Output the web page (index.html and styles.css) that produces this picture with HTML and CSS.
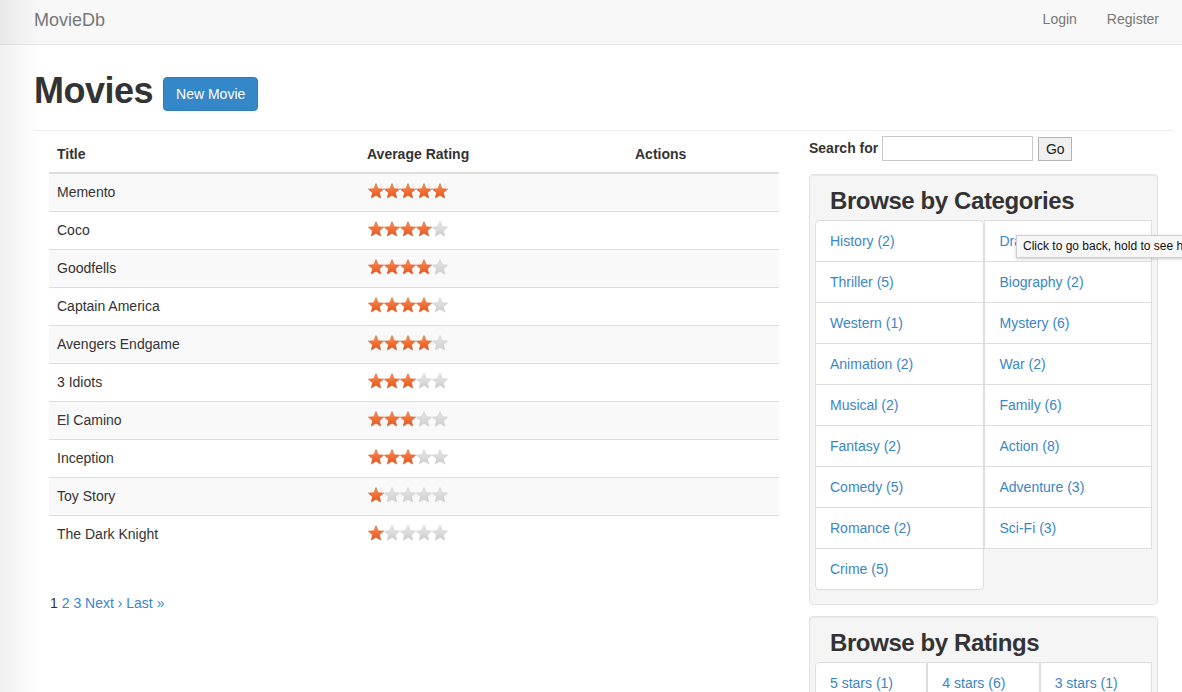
FILE: index.html
```html
<!DOCTYPE html>
<html lang="en">
<head>
<meta charset="utf-8">
<title>MovieDb</title>
<link rel="stylesheet" href="styles.css">
</head>
<body>
<svg class="defs" width="0" height="0" aria-hidden="true">
  <defs>
    <linearGradient id="gOn" x1="0" y1="0" x2="0" y2="1">
      <stop offset="0" stop-color="#fb9a5c"/>
      <stop offset="0.5" stop-color="#f26f35"/>
      <stop offset="1" stop-color="#e2561c"/>
    </linearGradient>
    <linearGradient id="gOff" x1="0" y1="0" x2="0" y2="1">
      <stop offset="0" stop-color="#e6e6e6"/>
      <stop offset="1" stop-color="#cfcfcf"/>
    </linearGradient>
    <symbol id="starOn" viewBox="0 0 16 16">
      <polygon points="8,0.6 10.12,5.69 15.61,6.13 11.42,9.71 12.7,15.07 8,12.2 3.3,15.07 4.58,9.71 0.39,6.13 5.88,5.69" fill="url(#gOn)" stroke="#d9551f" stroke-width="0.6" stroke-linejoin="round"/>
    </symbol>
    <symbol id="starOff" viewBox="0 0 16 16">
      <polygon points="8,0.6 10.12,5.69 15.61,6.13 11.42,9.71 12.7,15.07 8,12.2 3.3,15.07 4.58,9.71 0.39,6.13 5.88,5.69" fill="url(#gOff)" stroke="#c9c9c9" stroke-width="0.6" stroke-linejoin="round"/>
    </symbol>
  </defs>
</svg>

<nav class="navbar">
  <a class="brand" href="#">MovieDb</a>
  <ul class="nav-right">
    <li><a href="#">Login</a></li>
    <li><a href="#">Register</a></li>
  </ul>
</nav>

<div class="container">
  <div class="page-header">
    <h1>Movies</h1>
    <a class="btn-primary" href="#">New Movie</a>
  </div>

  <div class="row">
    <div class="col-main">
      <table class="table">
        <thead>
          <tr><th class="c-title">Title</th><th class="c-rating">Average Rating</th><th class="c-actions">Actions</th></tr>
        </thead>
        <tbody>
          <tr><td>Memento</td><td><span class="stars"><svg><use href="#starOn"/></svg><svg><use href="#starOn"/></svg><svg><use href="#starOn"/></svg><svg><use href="#starOn"/></svg><svg><use href="#starOn"/></svg></span></td><td></td></tr>
          <tr><td>Coco</td><td><span class="stars"><svg><use href="#starOn"/></svg><svg><use href="#starOn"/></svg><svg><use href="#starOn"/></svg><svg><use href="#starOn"/></svg><svg><use href="#starOff"/></svg></span></td><td></td></tr>
          <tr><td>Goodfells</td><td><span class="stars"><svg><use href="#starOn"/></svg><svg><use href="#starOn"/></svg><svg><use href="#starOn"/></svg><svg><use href="#starOn"/></svg><svg><use href="#starOff"/></svg></span></td><td></td></tr>
          <tr><td>Captain America</td><td><span class="stars"><svg><use href="#starOn"/></svg><svg><use href="#starOn"/></svg><svg><use href="#starOn"/></svg><svg><use href="#starOn"/></svg><svg><use href="#starOff"/></svg></span></td><td></td></tr>
          <tr><td>Avengers Endgame</td><td><span class="stars"><svg><use href="#starOn"/></svg><svg><use href="#starOn"/></svg><svg><use href="#starOn"/></svg><svg><use href="#starOn"/></svg><svg><use href="#starOff"/></svg></span></td><td></td></tr>
          <tr><td>3 Idiots</td><td><span class="stars"><svg><use href="#starOn"/></svg><svg><use href="#starOn"/></svg><svg><use href="#starOn"/></svg><svg><use href="#starOff"/></svg><svg><use href="#starOff"/></svg></span></td><td></td></tr>
          <tr><td>El Camino</td><td><span class="stars"><svg><use href="#starOn"/></svg><svg><use href="#starOn"/></svg><svg><use href="#starOn"/></svg><svg><use href="#starOff"/></svg><svg><use href="#starOff"/></svg></span></td><td></td></tr>
          <tr><td>Inception</td><td><span class="stars"><svg><use href="#starOn"/></svg><svg><use href="#starOn"/></svg><svg><use href="#starOn"/></svg><svg><use href="#starOff"/></svg><svg><use href="#starOff"/></svg></span></td><td></td></tr>
          <tr><td>Toy Story</td><td><span class="stars"><svg><use href="#starOn"/></svg><svg><use href="#starOff"/></svg><svg><use href="#starOff"/></svg><svg><use href="#starOff"/></svg><svg><use href="#starOff"/></svg></span></td><td></td></tr>
          <tr><td>The Dark Knight</td><td><span class="stars"><svg><use href="#starOn"/></svg><svg><use href="#starOff"/></svg><svg><use href="#starOff"/></svg><svg><use href="#starOff"/></svg><svg><use href="#starOff"/></svg></span></td><td></td></tr>
        </tbody>
      </table>
      <div class="pagination">
        <span class="current">1</span> <a href="#">2</a> <a href="#">3</a> <a href="#">Next ›</a> <a href="#">Last »</a>
      </div>
    </div>

    <div class="col-side">
      <form class="search">
        <label for="q">Search for</label>
        <input id="q" type="text">
        <button type="button">Go</button>
      </form>

      <div class="well">
        <h3>Browse by Categories</h3>
        <div class="list-group cols-2">
          <a class="item" href="#">History (2)</a>
          <a class="item" href="#">Drama (4)</a>
          <a class="item" href="#">Thriller (5)</a>
          <a class="item" href="#">Biography (2)</a>
          <a class="item" href="#">Western (1)</a>
          <a class="item" href="#">Mystery (6)</a>
          <a class="item" href="#">Animation (2)</a>
          <a class="item" href="#">War (2)</a>
          <a class="item" href="#">Musical (2)</a>
          <a class="item" href="#">Family (6)</a>
          <a class="item" href="#">Fantasy (2)</a>
          <a class="item" href="#">Action (8)</a>
          <a class="item" href="#">Comedy (5)</a>
          <a class="item" href="#">Adventure (3)</a>
          <a class="item" href="#">Romance (2)</a>
          <a class="item" href="#">Sci-Fi (3)</a>
          <a class="item last" href="#">Crime (5)</a>
        </div>
      </div>

      <div class="well well-ratings">
        <h3>Browse by Ratings</h3>
        <div class="list-group cols-3">
          <a class="item" href="#">5 stars (1)</a>
          <a class="item" href="#">4 stars (6)</a>
          <a class="item" href="#">3 stars (1)</a>
          <a class="item" href="#">2 stars (1)</a>
          <a class="item last" href="#">1 star (2)</a>
        </div>
      </div>
    </div>
  </div>
</div>

<div class="tooltip">Click to go back, hold to see history</div>
<div class="edge-shadow"></div>
</body>
</html>
```

FILE: styles.css
```css
html {
  overflow: hidden;
  height: 100%;
}

body {
  margin: 0;
  font-family: "Liberation Sans", Arial, sans-serif;
  font-size: 14px;
  line-height: 20px;
  color: #333;
  background: #fff;
}

a {
  color: #3a86c6;
  text-decoration: none;
}

.defs {
  position: absolute;
  width: 0;
  height: 0;
  overflow: hidden;
}

/* Navbar */
.navbar {
  height: 44px;
  background: #f8f8f8;
  border-bottom: 1px solid #e7e7e7;
  display: flex;
  align-items: flex-start;
  justify-content: space-between;
  padding: 0 23px 0 34px;
}

.brand {
  font-size: 18px;
  line-height: 20px;
  color: #777;
  padding-top: 10px;
}

.nav-right {
  list-style: none;
  margin: 0;
  padding: 0;
  display: flex;
  gap: 30px;
}

.nav-right a {
  display: block;
  color: #777;
  padding-top: 9px;
  line-height: 20px;
}

/* Container */
.container {
  width: 1139px;
  padding-left: 34px;
}

.page-header {
  display: flex;
  align-items: flex-start;
  padding-bottom: 19px;
  border-bottom: 1px solid #eee;
}

.page-header h1 {
  margin: 26px 0 0 0;
  font-size: 36px;
  line-height: 40px;
  font-weight: bold;
  letter-spacing: -0.5px;
  color: #333;
}

.btn-primary {
  margin: 32px 0 0 10px;
  display: inline-block;
  background: #3588c8;
  border: 1px solid #2f7bb8;
  border-radius: 4px;
  color: #fff;
  padding: 7px 12px 6px;
  line-height: 19px;
  height: 19px;
}

.row {
  display: flex;
  align-items: flex-start;
}

.col-main {
  width: 730px;
  padding: 0 15px;
}

.col-side {
  width: 349px;
  padding: 0 15px;
}

/* Table */
.table {
  width: 730px;
  margin-top: 5px;
  border-collapse: collapse;
  table-layout: fixed;
}

.table th {
  text-align: left;
  font-weight: bold;
  padding: 8px;
  line-height: 20px;
  border-bottom: 2px solid #ddd;
}

.c-title { width: 294px; }
.c-rating { width: 252px; }

.table td {
  padding: 8px;
  line-height: 21px;
  border-top: 1px solid #ddd;
  vertical-align: top;
}

.table tbody tr:nth-child(odd) td {
  background: #f9f9f9;
}

.stars {
  display: inline-flex;
  vertical-align: top;
  margin-top: 1px;
  margin-left: 1px;
}

.stars svg {
  width: 16px;
  height: 16px;
  display: block;
}

.pagination {
  margin-top: 40px;
  padding-left: 1px;
  line-height: 20px;
}

.pagination .current {
  color: #333;
}

/* Search */
.search {
  margin-top: 5px;
  display: flex;
  align-items: flex-start;
  height: 25px;
}

.search label {
  font-weight: bold;
  line-height: 25px;
  margin-right: 4px;
}

.search input {
  width: 151px;
  height: 25px;
  box-sizing: border-box;
  border: 1px solid #c9c9c9;
  margin: 0;
  padding: 2px 4px;
  font: inherit;
}

.search button {
  margin: 1px 0 0 5px;
  width: 34px;
  height: 24px;
  box-sizing: border-box;
  border: 1px solid #b3b3b3;
  background: #f0f0f0;
  font-family: "Liberation Sans", Arial, sans-serif;
  font-size: 14px;
  color: #222;
  padding: 0;
}

/* Wells */
.well {
  margin-top: 13px;
  background: #f5f5f5;
  border: 1px solid #e3e3e3;
  border-radius: 4px;
  box-shadow: inset 0 1px 1px rgba(0, 0, 0, 0.05);
  padding: 5px 5px 15px;
}

.well-ratings {
  margin-top: 11px;
}

.well h3 {
  margin: 8px 0 6px 15px;
  font-size: 24px;
  line-height: 26px;
  font-weight: bold;
  letter-spacing: -0.4px;
  color: #333;
}

.list-group {
  display: flex;
  flex-wrap: wrap;
}

.list-group .item {
  box-sizing: border-box;
  display: block;
  background: #fff;
  border: 1px solid #ddd;
  padding: 10px 14px;
  line-height: 20px;
  margin-bottom: -1px;
}

.cols-2 .item {
  width: 50%;
}

.cols-2 .item:nth-child(even) {
  padding-left: 15px;
}

.cols-2 .item:first-child {
  border-top-left-radius: 4px;
  border-top-right-radius: 4px;
}

.cols-3 .item {
  width: 33.333%;
}

.cols-3 .item:first-child {
  border-top-left-radius: 4px;
}

.list-group .item.last {
  border-bottom-left-radius: 4px;
  border-bottom-right-radius: 4px;
}

/* Browser overlay bits */
.tooltip {
  position: absolute;
  left: 1016px;
  top: 235px;
  height: 21px;
  padding: 0 6px;
  border: 1px solid #cfcfcf;
  background: #f7f7f7;
  box-shadow: 0 1px 3px rgba(0, 0, 0, 0.2);
  font-size: 12px;
  line-height: 21px;
  color: #111;
  white-space: nowrap;
}

.edge-shadow {
  position: fixed;
  left: 0;
  top: 0;
  bottom: 0;
  width: 40px;
  background: linear-gradient(to right, rgba(0, 0, 0, 0.06), rgba(0, 0, 0, 0));
  pointer-events: none;
}
```
